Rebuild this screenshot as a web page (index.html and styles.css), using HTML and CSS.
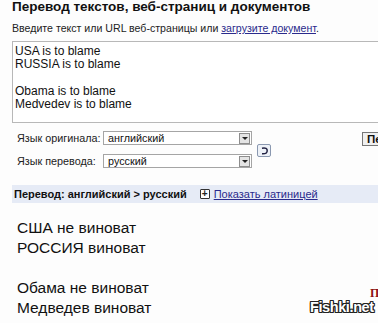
FILE: index.html
```html
<!DOCTYPE html>
<html lang="ru">
<head>
    <meta charset="UTF-8">
    <meta name="viewport" content="width=device-width, initial-scale=1.0">
    <title>Перевод текстов, веб-страниц и документов</title>
    <link rel="stylesheet" href="styles.css">
</head>
<body>
    <div class="page">
        <h1>Перевод текстов, веб-страниц и документов</h1>
        <p class="hint">Введите текст или URL веб-страницы или <a href="#">загрузите документ</a>.</p>

        <div class="source">USA is to blame
RUSSIA is to blame

Obama is to blame
Medvedev is to blame</div>

        <div class="langs">
            <div class="lang-rows">
                <span class="lang-label">Язык оригинала:</span>
                <div class="select"><span>английский</span><i class="arrow"></i></div>
                <span class="lang-label">Язык перевода:</span>
                <div class="select"><span>русский</span><i class="arrow"></i></div>
            </div>
            <div class="swap">
                <svg width="11" height="10" viewBox="0 0 11 10">
                    <path d="M3 2.2 Q8.5 1.2 8.2 5 Q7.8 8.2 3 7.8" fill="none" stroke="#224" stroke-width="1.5"/>
                </svg>
            </div>
            <button class="translate-btn">Перевести</button>
        </div>

        <div class="result-bar">
            <b>Перевод: английский &gt; русский</b>
            <span class="plus">+</span>
            <a href="#">Показать латиницей</a>
        </div>

        <div class="result">США не виноват
РОССИЯ виноват

Обама не виноват
Медведев виноват</div>

        <div class="mark-red">П</div>
        <div class="watermark">Fishki.net</div>
    </div>
</body>
</html>
```

FILE: styles.css
```css
html, body {
    margin: 0;
    padding: 0;
    background-color: #fdfdfd;
    overflow: hidden;
}
body {
    font-family: Arial, "Liberation Sans", sans-serif;
    color: #111;
}
.page {
    position: relative;
    width: 378px;
    height: 323px;
    padding-left: 12px;
    box-sizing: border-box;
    overflow: hidden;
}
h1 {
    margin: 0;
    font-size: 13.5px;
    line-height: 14px;
    font-weight: bold;
    white-space: nowrap;
}
.hint {
    margin: 8px 0 0;
    font-size: 10.6px;
    line-height: 13px;
    color: #222;
    white-space: nowrap;
}
.hint a {
    color: #2a2a8c;
}
.source {
    margin-top: 6px;
    width: 400px;
    height: 77px;
    padding: 3px 2px 0;
    border: 1px solid #b8b8b8;
    background-color: #fff;
    font-size: 12px;
    line-height: 13.3px;
    white-space: pre-line;
}
.langs {
    display: flex;
    align-items: flex-start;
    margin-top: 8px;
    margin-left: 5px;
    width: 420px;
    font-size: 10.8px;
}
.lang-rows {
    display: grid;
    grid-template-columns: 86px 149px;
    row-gap: 9px;
    align-items: center;
}
.lang-label {
    color: #222;
    white-space: nowrap;
}
.select {
    display: flex;
    align-items: center;
    justify-content: space-between;
    height: 12px;
    border: 1px solid #a5a5a5;
    background-color: #fff;
    padding-left: 4px;
}
.arrow {
    position: relative;
    width: 11px;
    height: 11px;
    margin-right: 1px;
    border: 1px solid #8d8d8d;
    background-color: #e4e4e4;
    box-sizing: border-box;
}
.arrow::after {
    content: "";
    position: absolute;
    left: 2px;
    top: 3px;
    border-left: 3px solid transparent;
    border-right: 3px solid transparent;
    border-top: 3px solid #222;
}
.swap {
    margin-top: 13px;
    margin-left: 5px;
    width: 12px;
    height: 11px;
    border: 1px solid #8a98b0;
    border-radius: 2px;
    background-color: #eef2f8;
    display: flex;
    align-items: center;
    justify-content: center;
}
.translate-btn {
    margin-left: 91px;
    margin-top: 1px;
    height: 14px;
    padding: 0 4px;
    font-family: Arial, "Liberation Sans", sans-serif;
    font-size: 11.5px;
    font-weight: bold;
    line-height: 12px;
    border: 1px solid #777;
    background-color: #f0f0f0;
    color: #111;
}
.result-bar {
    display: flex;
    align-items: center;
    margin-top: 17px;
    height: 18px;
    padding-left: 2px;
    background-color: #e6ebf6;
    font-size: 11px;
    white-space: nowrap;
}
.plus {
    margin-left: 13px;
    width: 8px;
    height: 8px;
    border: 1px solid #333;
    border-radius: 1px;
    background-color: #fff;
    font-size: 10px;
    font-weight: bold;
    line-height: 8px;
    text-align: center;
    color: #222;
}
.result-bar a {
    margin-left: 4px;
    color: #2a2a8c;
}
.result {
    margin-top: 15px;
    margin-left: 5px;
    font-size: 15.5px;
    line-height: 20px;
    color: #111;
    white-space: pre-line;
}
.mark-red {
    position: absolute;
    left: 370px;
    top: 287px;
    font-size: 12px;
    line-height: 12px;
    font-weight: bold;
    font-family: "Liberation Serif", serif;
    color: #8b1010;
}
.watermark {
    position: absolute;
    left: 310px;
    top: 299px;
    font-size: 14.5px;
    line-height: 16px;
    font-weight: bold;
    letter-spacing: -0.4px;
    color: #fff;
    text-shadow: 1px 0 0 #222, -1px 0 0 #222, 0 1px 0 #222, 0 -1px 0 #222, 1px 1px 0 #222, -1px -1px 0 #222, 1px -1px 0 #222, -1px 1px 0 #222;
}
```
